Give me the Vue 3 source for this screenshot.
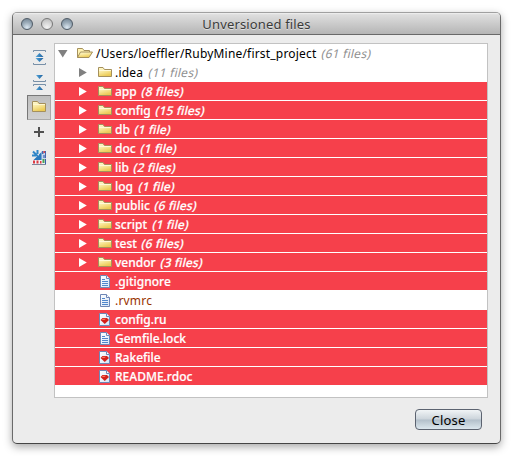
<script setup>
const folders = [
  { name: 'app', count: '(8 files)' },
  { name: 'config', count: '(15 files)' },
  { name: 'db', count: '(1 file)' },
  { name: 'doc', count: '(1 file)' },
  { name: 'lib', count: '(2 files)' },
  { name: 'log', count: '(1 file)' },
  { name: 'public', count: '(6 files)' },
  { name: 'script', count: '(1 file)' },
  { name: 'test', count: '(6 files)' },
  { name: 'vendor', count: '(3 files)' },
].map((f) => ({ ...f, icon: 'folder', marked: true }))

const rows = [
  { name: '/Users/loeffler/RubyMine/first_project', count: '(61 files)', icon: 'open', root: true },
  { name: '.idea', count: '(11 files)', icon: 'folder' },
  ...folders,
  { name: '.gitignore', icon: 'text', marked: true },
  { name: '.rvmrc', icon: 'text', unknown: true },
  { name: 'config.ru', icon: 'ruby', marked: true },
  { name: 'Gemfile.lock', icon: 'text', marked: true },
  { name: 'Rakefile', icon: 'ruby', marked: true },
  { name: 'README.rdoc', icon: 'ruby', marked: true },
]
</script>

<template>
  <div class="stage">
    <svg class="defs" width="0" height="0">
      <defs>
        <linearGradient id="gold" x1="0" y1="0" x2="0.4" y2="1">
          <stop offset="0" stop-color="#fffbd6" />
          <stop offset="0.5" stop-color="#f9e9a0" />
          <stop offset="1" stop-color="#eccb55" />
        </linearGradient>
        <linearGradient id="page" x1="0" y1="0" x2="1" y2="1">
          <stop offset="0" stop-color="#ffffff" />
          <stop offset="1" stop-color="#d5e4f6" />
        </linearGradient>
        <linearGradient id="blue" x1="0" y1="0" x2="1" y2="0">
          <stop offset="0" stop-color="#55a7dc" />
          <stop offset="1" stop-color="#1d5f9c" />
        </linearGradient>
      </defs>
    </svg>
    <div class="window">
      <header class="titlebar">
        <div class="lights"><i class="on"></i><i></i><i class="on"></i></div>
        <h1>Unversioned files</h1>
      </header>
      <main class="body">
        <nav class="tools">
          <button class="tool" aria-label="Expand all">
            <svg width="16" height="16" viewBox="0 0 16 16">
              <path d="M2.500 3V1.500h12V3M2.500 14v1.500h12V14" fill="none" stroke="#7890a8" />
              <path d="M8.500 4l4 4h-8zM4.500 9h8l-4 4z" fill="url(#blue)" />
            </svg>
          </button>
          <button class="tool" aria-label="Collapse all">
            <svg width="16" height="16" viewBox="0 0 16 16">
              <path d="M2.500 6v1.500h12V6M2.500 12v-1.500h12V12" fill="none" stroke="#7890a8" />
              <path d="M5 1h7L8.500 5zM8.500 12l3.500 4H5z" fill="url(#blue)" />
            </svg>
          </button>
          <button class="tool pressed" aria-label="Group by directory">
            <svg width="16" height="16" viewBox="0 0 16 16">
              <path d="M1.500 12.500v-10h5l1.500 2h6.500v8z" fill="url(#gold)" stroke="#a5905c" />
              <path d="M2 5.500h12" stroke="#fff8cf" />
            </svg>
          </button>
          <button class="tool" aria-label="Add">
            <svg width="16" height="16" viewBox="0 0 16 16">
              <path d="M8 3v10M3 8h10" stroke="#505050" stroke-width="2" />
            </svg>
          </button>
          <button class="tool" aria-label="Ignore">
            <svg width="16" height="16" viewBox="0 0 16 16">
              <path d="M10 2h5v13h-5z" fill="#c9d6ea" />
              <path d="M1 11h14v4H1z" fill="#eef0f6" />
              <path d="M2 11.500h2v3H2zM5.500 11.500h2v3h-2zM9 12h1.500v2.500H9z" fill="#dd3a42" />
              <path d="M11 2h1.500v3H11zM14 2h1v7h-1z" fill="#4668ae" />
              <path d="M12.500 2h1.500v2h-1.500z" fill="#d8474f" />
              <path d="M12 6h2v3h-2z" fill="#7391cc" />
              <path d="M11.500 10h2v4h-2z" fill="#4aa356" />
              <path d="M14 10h1v5h-1z" fill="#3b5da8" />
              <path d="M1 15.500h14" stroke="#7d879c" />
              <path d="M2 2.500l6 6M6.500 1v4M1 6.500h4" fill="none" stroke="#2f86c8" stroke-width="2" />
              <path d="M10.500 3v8H2.500l3-3 2-.5.500-2z" fill="#2878bd" />
            </svg>
          </button>
        </nav>
        <ul class="tree">
          <li v-for="row in rows" :key="row.name" class="row" :class="{ marked: row.marked, root: row.root }">
            <span class="arrow">
              <svg v-if="row.root" width="10" height="10" viewBox="0 0 10 10"><path d="M0 2h9.500L4.750 9.500z" /></svg>
              <svg v-else-if="row.icon === 'folder'" width="10" height="10" viewBox="0 0 10 10"><path d="M2 1v9l7.800-4.500z" /></svg>
            </span>
            <svg class="icon" width="16" height="16" viewBox="0 0 16 16">
              <g v-if="row.icon === 'open'" stroke="#a5905c" stroke-linejoin="round">
                <path d="M.5 12.500v-9h5l1.500 2h5.500v1.500" fill="#fff3b3" />
                <path d="M.5 12.500l3-5.500h12l-3.500 5.500z" fill="url(#gold)" />
              </g>
              <g v-else-if="row.icon === 'folder'">
                <path d="M1.500 12.500v-9h4.500l1.500 2h7v7z" fill="url(#gold)" stroke="#a5905c" />
                <path d="M2 6.500h12" stroke="#fff9d8" />
              </g>
              <g v-else transform="translate(0 1)">
                <path v-if="row.icon === 'text'" d="M3.500 1.500h6l3 3v9h-9z" fill="url(#page)" stroke="#6e86b5" />
                <path v-else d="M2.500 1.500h7l3 3v9h-10z" fill="url(#page)" stroke="#6e86b5" />
                <path d="M9.500 1.500v3h3" fill="#fff" stroke="#6e86b5" />
                <path v-if="row.icon === 'text'" d="M5 5.500h3M5 7.500h6M5 9.500h6M5 11.500h6" stroke="#4f86cc" />
                <g v-else>
                  <path d="M3.500 8l2-2h4.500l2 2-4.250 4z" fill="#d51f1a" />
                  <path d="M4.500 8l1.500-1.200h3L7.500 8z" fill="#f57a62" />
                </g>
              </g>
            </svg>
            <span class="name" :class="{ unknown: row.unknown }">{{ row.name }}</span>
            <span v-if="row.count" class="count">{{ row.count }}</span>
          </li>
        </ul>
      </main>
      <footer class="footer"><button class="close">Close</button></footer>
    </div>
  </div>
</template>

<style>
body { margin: 0; background: #fff; overflow: hidden; }
</style>

<style scoped>
.stage {
  box-sizing: border-box;
  width: 513px;
  height: 456px;
  padding: 12px;
  font-family: "Noto Sans", "Open Sans", sans-serif;
  font-size: 12px;
  color: #000;
  overflow: hidden;
}
.defs { display: block; height: 0; }
.window {
  box-sizing: border-box;
  width: 489px;
  height: 432px;
  border: 1px solid #6a6a6a;
  border-top-color: #a0a0a0;
  border-bottom-color: #454545;
  border-radius: 5px;
  background: #ececec;
  box-shadow: 0 3px 9px rgba(0, 0, 0, 0.34);
  overflow: hidden;
}
.titlebar {
  box-sizing: border-box;
  display: grid;
  grid-template-columns: 80px 1fr 80px;
  align-items: center;
  height: 22px;
  border-bottom: 1px solid #696969;
  background: linear-gradient(#f2f2f2, #dedede 8%, #b5b5b5);
}
.lights { display: flex; gap: 8px; padding-left: 8px; }
.lights i {
  box-sizing: border-box;
  width: 12px;
  height: 12px;
  border: 1px solid #777;
  border-radius: 50%;
  background: radial-gradient(circle at 50% 85%, #f4f4f4, #d0d0d0 60%, #b5b5b5);
}
.lights .on {
  border-color: #505b66;
  background: radial-gradient(circle at 50% 85%, #dce8f2, #9dadba 50%, #6d7f8f);
}
h1 {
  margin: 0;
  font-size: 13px;
  line-height: 20px;
  font-weight: 400;
  letter-spacing: 0.15px;
  text-align: center;
  color: #3b3b3b;
  text-shadow: 0 1px 0 rgba(255, 255, 255, 0.5);
}
.body { display: flex; padding: 8px 12px 0 14px; }
.tools { width: 27px; display: flex; flex-direction: column; padding-top: 2px; }
.tool {
  box-sizing: border-box;
  display: flex;
  align-items: flex-start;
  width: 24px;
  height: 25px;
  padding: 4px 0 0 4px;
  border: 0;
  background: none;
}
.pressed {
  padding: 3px 0 0 3px;
  border: 1px solid #aaa;
  border-top-color: #777;
  border-left-color: #777;
  background: linear-gradient(#bebebe, #d0d0d0);
}
.tree {
  box-sizing: border-box;
  width: 434px;
  height: 355px;
  margin: 0;
  padding: 0;
  border: 1px solid #c2c2c2;
  background: #fff;
  list-style: none;
}
.row {
  box-sizing: border-box;
  display: flex;
  align-items: center;
  height: 19px;
  padding-left: 22px;
  border-bottom: 1px solid #fff;
  white-space: nowrap;
}
.arrow { display: flex; width: 19px; fill: #808080; }
.icon { flex: none; margin: 0 2px 0 1px; }
.root { padding-left: 3px; }
.root .icon { margin: 0 3px 0 0; }
.marked {
  background: #f6404b;
  background-clip: padding-box;
  color: #fff;
  font-weight: 500;
  -webkit-text-stroke: 0.2px #fff;
}
.marked .arrow { fill: #fff; }
.name { padding-top: 2px; line-height: 16px; letter-spacing: 0.19px; }
.marked .name { letter-spacing: 0; }
.count {
  margin-left: 5.5px;
  padding-top: 2px;
  line-height: 16px;
  letter-spacing: 0.25px;
  color: #909090;
  transform: skewX(-13deg);
}
.marked .count { color: #fff; letter-spacing: 0.12px; }
.unknown { color: #993300; }
.footer { display: flex; justify-content: flex-end; padding: 11px 18px 0 0; }
.close {
  box-sizing: border-box;
  width: 67px;
  height: 21px;
  padding: 0;
  border: 1px solid #5c6370;
  border-radius: 4px;
  background: linear-gradient(#f1f4f6, #ccd4db 48%, #b2bfca 52%, #dce7ee);
  font-family: inherit;
  font-size: 13px;
  line-height: 18px;
  letter-spacing: 0.2px;
  color: #000;
}
</style>
